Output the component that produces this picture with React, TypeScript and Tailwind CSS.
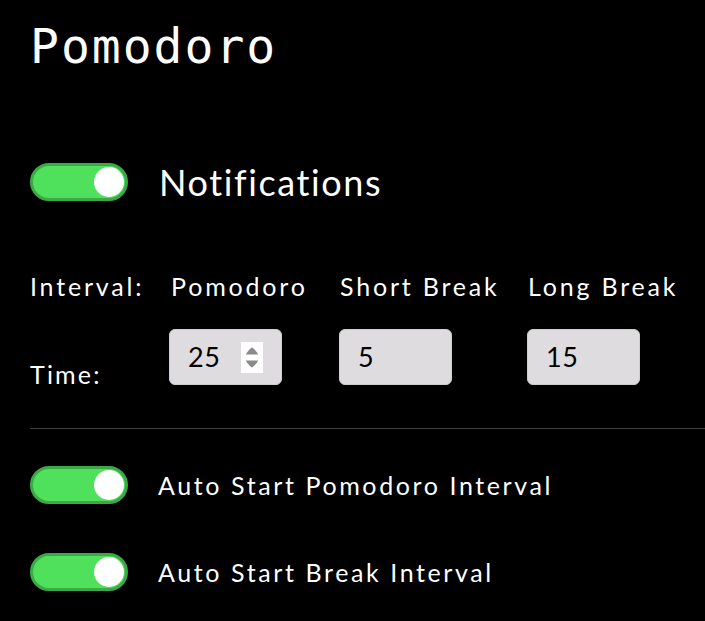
const body = "font-['Lato','Liberation_Sans',sans-serif]";

function Toggle() {
  return (
    <div className="flex h-[38px] w-[98px] shrink-0 items-center justify-end rounded-full border-[3px] border-[#3ba946] bg-[#4fe15c] pr-[1px]">
      <div className="h-[30px] w-[30px] rounded-full bg-white" />
    </div>
  );
}

function NumberBox({ value, spin }: { value: string; spin?: boolean }) {
  return (
    <div className="flex h-[56px] w-[113px] items-center rounded-[6px] border border-[#cfcdd0] bg-[#dfdcdf] pl-[18px] pr-[18px]">
      <span className={`${body} flex-1 text-[27px] tracking-[0.5px] text-black`}>{value}</span>
      {spin && (
        <div className="flex h-[31px] w-[22px] flex-col items-center justify-center gap-[5px] bg-white">
          <svg width="14" height="9" viewBox="0 0 14 9">
            <path d="M1 8.5 C1 7 6 1.5 7 1.5 S13 7 13 8.5 Z" fill="#8a8a8a" />
          </svg>
          <svg width="14" height="9" viewBox="0 0 14 9">
            <path d="M1 0.5 C1 2 6 7.5 7 7.5 S13 2 13 0.5 Z" fill="#8a8a8a" />
          </svg>
        </div>
      )}
    </div>
  );
}

export default function App() {
  return (
    <div className="min-h-[621px] w-full overflow-hidden bg-black text-white">
      <div className="pl-[30px]">
        <h1 className="pt-[22px] font-['DejaVu_Sans_Mono',monospace] text-[48px] leading-none tracking-[2px]">
          Pomodoro
        </h1>

        {/* Notifications */}
        <div className="mt-[93px] flex items-center gap-[31px]">
          <Toggle />
          <span className={`${body} text-[36px] leading-none tracking-[1.6px]`}>Notifications</span>
        </div>

        {/* Interval table */}
        <div className={`${body} mt-[71px] grid grid-cols-[139px_170px_188px_auto] text-[25px] tracking-[2.8px]`}>
          <div className="flex h-[30px] items-center">Interval:</div>
          <div className="flex h-[30px] items-center pl-[2px]">Pomodoro</div>
          <div className="flex h-[30px] items-center pl-[1px]">Short Break</div>
          <div className="flex h-[30px] items-center pl-[1px]">Long Break</div>

          <div className="mt-[27px] flex items-end leading-none tracking-[2.2px]">
            <span className="-mb-[2px]">Time:</span>
          </div>
          <div className="mt-[27px]">
            <NumberBox value="25" spin />
          </div>
          <div className="mt-[27px]">
            <NumberBox value="5" />
          </div>
          <div className="mt-[27px]">
            <NumberBox value="15" />
          </div>
        </div>

        <div className="mt-[43px] h-px bg-[#3d3d3d]" />

        <div className="mt-[37px] flex flex-col gap-[49px]">
          <div className="flex items-center gap-[30px]">
            <Toggle />
            <span className={`${body} text-[25px] leading-none tracking-[2.6px]`}>Auto Start Pomodoro Interval</span>
          </div>
          <div className="flex items-center gap-[30px]">
            <Toggle />
            <span className={`${body} text-[25px] leading-none tracking-[2.6px]`}>Auto Start Break Interval</span>
          </div>
        </div>
      </div>
    </div>
  );
}
